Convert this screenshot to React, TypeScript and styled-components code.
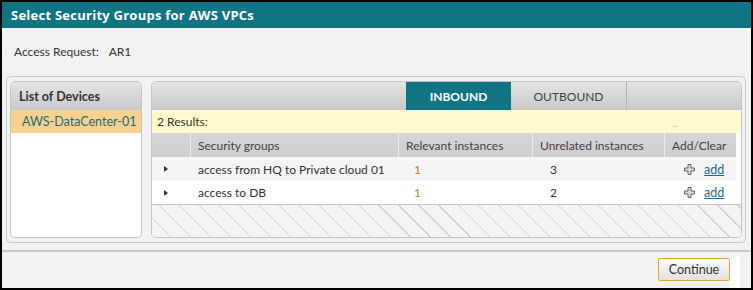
import React from "react";
import styled, { createGlobalStyle } from "styled-components";

const Global = createGlobalStyle`
  html, body { margin: 0; padding: 0; background: #000; }
  body { font-family: "Lato", "Noto Sans", sans-serif; }
  * { box-sizing: border-box; }
`;

const Frame = styled.div`
  width: 753px;
  height: 290px;
  background: #000;
  padding: 2px;
  overflow: hidden;
`;

const Dialog = styled.div`
  width: 749px;
  height: 286px;
  background: #f2f2f2;
  display: flex;
  flex-direction: column;
`;

const TitleBar = styled.div`
  height: 26px;
  background: #117482;
  color: #fff;
  font-family: "Open Sans", sans-serif;
  font-weight: 700;
  font-size: 13px;
  letter-spacing: 0.25px;
  display: flex;
  align-items: center;
  padding-left: 9px;
`;

const InfoLine = styled.div`
  height: 49px;
  display: flex;
  align-items: center;
  padding-left: 12px;
  padding-bottom: 1px;
  font-size: 12px;
  color: #333;
  gap: 10px;
`;

const Outer = styled.div`
  margin-left: 4px;
  width: 740px;
  height: 168px;
  border: 1px solid #c8c8c8;
  border-radius: 5px;
  padding: 4px 3px 4px 3px;
  display: flex;
  gap: 9px;
`;

const Panel = styled.div<{ $w: number }>`
  width: ${(p) => p.$w}px;
  border: 1px solid #c4c4c4;
  border-radius: 5px;
  background: #fff;
  overflow: hidden;
  display: flex;
  flex-direction: column;
`;

const PanelHead = styled.div`
  height: 28px;
  flex: none;
  background: linear-gradient(#e4e4e4, #c9c9c9);
  display: flex;
  align-items: stretch;
  font-size: 12.5px;
  font-weight: 700;
  color: #333;
`;

const HeadTitle = styled.div`
  display: flex;
  align-items: center;
  padding-left: 8px;
`;

const Spacer = styled.div<{ $w: number }>`
  width: ${(p) => p.$w}px;
`;

const DeviceRow = styled.div<{ $selected?: boolean }>`
  height: 23px;
  background: ${(p) => (p.$selected ? "#f9d18e" : "#fff")};
  color: #1f6b7c;
  font-size: 12.5px;
  display: flex;
  align-items: center;
  padding-left: 11px;
`;

const Tab = styled.div<{ $active?: boolean; $w: number }>`
  width: ${(p) => p.$w}px;
  display: flex;
  align-items: center;
  justify-content: center;
  font-size: 12px;
  font-weight: ${(p) => (p.$active ? 700 : 400)};
  color: ${(p) => (p.$active ? "#fff" : "#444")};
  background: ${(p) => (p.$active ? "#117482" : "transparent")};
  border-right: ${(p) => (p.$active ? "none" : "1px solid #b4b4b4")};
`;

const Results = styled.div`
  height: 23px;
  flex: none;
  background: #fffacd;
  display: flex;
  align-items: center;
  justify-content: space-between;
  padding-left: 5px;
  padding-right: 62px;
  font-size: 12px;
  color: #333;
`;

const Dots = styled.span`
  font-size: 9px;
  color: #aaa;
  letter-spacing: 1px;
  margin-top: 4px;
`;

const Table = styled.div`
  width: 584px;
  flex: none;
`;

const Grid = styled.div<{ $bg?: string; $h: number }>`
  display: grid;
  grid-template-columns: 38px 208px 134px 132px 72px;
  height: ${(p) => p.$h}px;
  background: ${(p) => p.$bg || "#fff"};
`;

const HeadCell = styled.div<{ $color?: string }>`
  display: flex;
  align-items: center;
  padding-left: 7px;
  font-size: 12px;
  color: ${(p) => p.$color || "#444"};
  border-left: 1px solid #eaeaea;
  &:first-child { border-left: none; }
`;

const Cell = styled.div<{ $color?: string; $pad?: number }>`
  display: flex;
  align-items: center;
  padding-left: ${(p) => (p.$pad ?? 8)}px;
  font-size: 12px;
  color: ${(p) => p.$color || "#333"};
  gap: 9px;
`;

const Arrow = styled.span`
  width: 0;
  height: 0;
  border-top: 3.5px solid transparent;
  border-bottom: 3.5px solid transparent;
  border-left: 4px solid #333;
  margin-left: 4px;
`;

const AddLink = styled.a`
  color: #1d6aa0;
  text-decoration: underline;
  font-size: 12.5px;
`;

const Hatch = styled.div`
  flex: 1;
  border-top: 1px solid #c4c4c4;
  background-color: #f4f4f4;
  background-image: repeating-linear-gradient(
    45deg,
    transparent 0,
    transparent 13.2px,
    #c6d4d4 13.2px,
    #c6d4d4 14.1px
  );
`;

const RightBody = styled.div`
  flex: 1;
  display: flex;
  flex-direction: column;
`;

const Footer = styled.div`
  margin-top: 7px;
  border-top: 2px solid #c9c9c9;
  flex: 1;
  display: flex;
  justify-content: flex-end;
  align-items: flex-start;
  padding-top: 6px;
`;

const Button = styled.button`
  width: 72px;
  height: 23px;
  border: 1px solid #e8a33a;
  border-radius: 2px;
  background: linear-gradient(#fafafa, #e2e2e2);
  font-family: "Lato", "Noto Sans", sans-serif;
  font-size: 12.5px;
  color: #333;
  padding: 0;
`;

const WhiteStrip = styled.div`
  width: 10px;
  height: 32px;
  margin-top: -2px;
  margin-right: 11px;
  background: #fff;
`;

const Plus = () => (
  <svg width="11" height="11" viewBox="0 0 11 11">
    <path
      d="M4 0.5h3v3.5h3.5v3h-3.5v3.5h-3v-3.5h-3.5v-3h3.5z"
      fill="#d8d8d8"
      stroke="#666"
      strokeWidth="1"
    />
  </svg>
);

const rows = [
  { name: "access from HQ to Private cloud 01", rel: "1", unrel: "3", bg: "#f5f5f5" },
  { name: "access to DB", rel: "1", unrel: "2", bg: "#fff" },
];

export default function App() {
  return (
    <Frame>
      <Global />
      <Dialog>
        <TitleBar>Select Security Groups for AWS VPCs</TitleBar>
        <InfoLine>
          <span>Access Request:</span>
          <span>AR1</span>
        </InfoLine>
        <Outer>
          <Panel $w={132}>
            <PanelHead>
              <HeadTitle>List of Devices</HeadTitle>
            </PanelHead>
            <DeviceRow $selected>AWS-DataCenter-01</DeviceRow>
          </Panel>
          <Panel $w={591}>
            <PanelHead>
              <Spacer $w={254} />
              <Tab $active $w={105}>INBOUND</Tab>
              <Tab $w={116}>OUTBOUND</Tab>
            </PanelHead>
            <RightBody>
              <Results>
                <span>2 Results:</span>
                <Dots>..</Dots>
              </Results>
              <Table>
                <Grid $h={24} $bg="linear-gradient(#d6d6d6, #cecece)">
                  <HeadCell />
                  <HeadCell>Security groups</HeadCell>
                  <HeadCell>Relevant instances</HeadCell>
                  <HeadCell $color="#4b3a4b">Unrelated instances</HeadCell>
                  <HeadCell>Add/Clear</HeadCell>
                </Grid>
                {rows.map((r, i) => (
                  <Grid key={i} $h={i === 0 ? 24 : 23} $bg={r.bg}>
                    <Cell $pad={8}>
                      <Arrow />
                    </Cell>
                    <Cell>{r.name}</Cell>
                    <Cell $color="#c47d1c" $pad={16}>{r.rel}</Cell>
                    <Cell $pad={18}>{r.unrel}</Cell>
                    <Cell $pad={20}>
                      <Plus />
                      <AddLink>add</AddLink>
                    </Cell>
                  </Grid>
                ))}
              </Table>
              <Hatch />
            </RightBody>
          </Panel>
        </Outer>
        <Footer>
          <Button>Continue</Button>
          <WhiteStrip />
        </Footer>
      </Dialog>
    </Frame>
  );
}
